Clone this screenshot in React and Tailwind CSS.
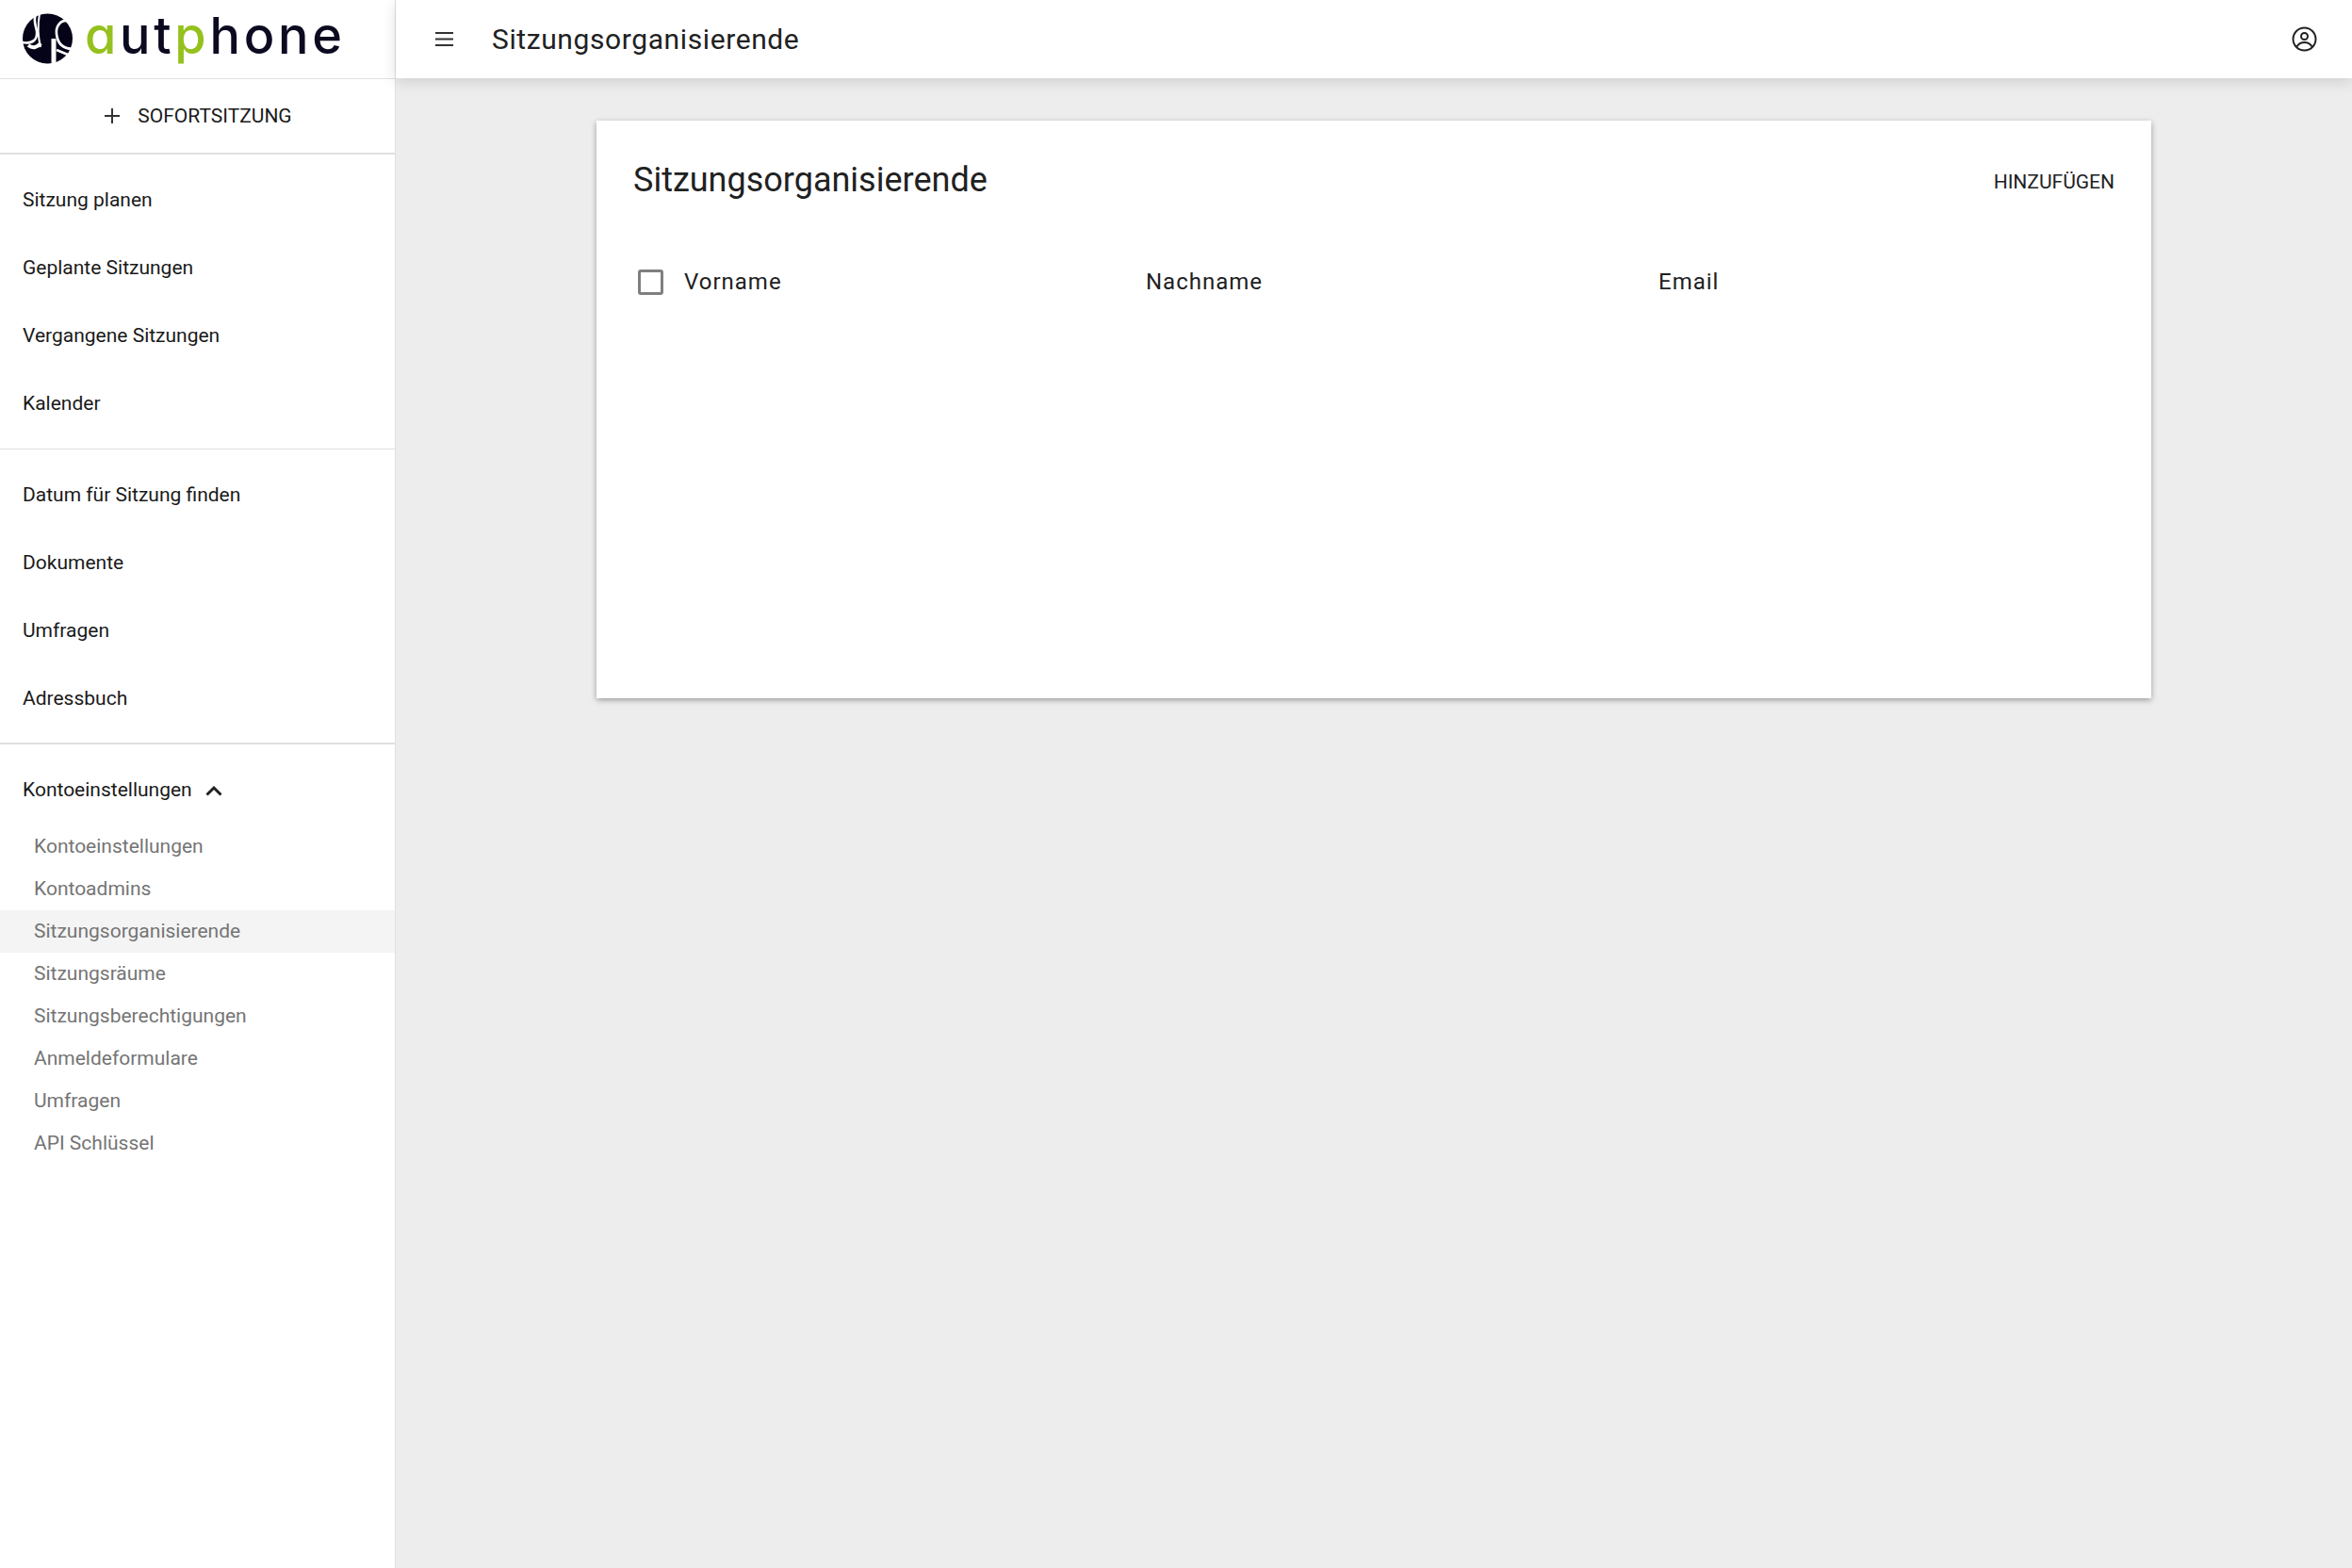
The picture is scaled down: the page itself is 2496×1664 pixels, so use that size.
import React from "react";

const top = ["Sitzung planen", "Geplante Sitzungen", "Vergangene Sitzungen", "Kalender"];
const mid = ["Datum für Sitzung finden", "Dokumente", "Umfragen", "Adressbuch"];
const sub = ["Kontoeinstellungen", "Kontoadmins", "Sitzungsorganisierende", "Sitzungsräume", "Sitzungsberechtigungen", "Anmeldeformulare", "Umfragen", "API Schlüssel"];

function Logo() {
  return (
    <svg width="56" height="56" viewBox="22 13 56 56" className="shrink-0">
      <circle cx="50.5" cy="41" r="26.5" fill="#050317" />
      <g fill="none" stroke="#fff">
        <path d="M38 14 C35 22 38 27 39 33 C40 42 35 47 23 45" strokeWidth="2.6" />
        <path d="M42 14 C40 26 40 38 43 50" strokeWidth="2" />
        <path d="M30 48 C35 52 40 50 43 46" strokeWidth="4" />
        <path d="M72 22 C64 21 59 28 60 36 C61 46 66 52 78 52" strokeWidth="2.6" />
        <path d="M57 41 L57 69" strokeWidth="5" />
        <path d="M60 53 L72 58" strokeWidth="2.6" />
      </g>
    </svg>
  );
}

function NavItem({ children }) {
  return <div className="flex h-[72px] items-center pl-6 text-[21px] text-[#1a1a1a]">{children}</div>;
}

export default function App() {
  return (
    <div className="flex min-h-screen bg-[#ededed] font-['Roboto',sans-serif]">
      <aside className="flex w-[420px] shrink-0 flex-col border-r border-[#e0e0e0] bg-white">
        <div className="flex h-[84px] items-start border-b border-[#e0e0e0] pl-[22px] pt-[13px]">
          <Logo />
          <span className="ml-[12px] mt-[-15px] font-['Inter',sans-serif] text-[54px] leading-[80px] font-medium tracking-[3.700px] text-[#0b0a20] [font-feature-settings:'cv11']">
            <span className="text-[#95c11f]">a</span>ut<span className="text-[#95c11f]">p</span>hone
          </span>
        </div>
        <div className="flex h-[80px] items-center justify-center gap-[17px] border-b-2 border-[#e0e0e0] pt-[2px] pr-[1px] text-[21px] text-[#1a1a1a]">
          <svg width="20" height="20" viewBox="0 0 20 20" stroke="#333" strokeWidth="2" className="ml-[1px] mb-[2px]"><path d="M10 2v16M2 10h16" /></svg>
          <span>SOFORTSITZUNG</span>
        </div>
        <div className="border-b border-[#e0e0e0] pt-[13px] pb-[11px]">
          {top.map((t) => <NavItem key={t}>{t}</NavItem>)}
        </div>
        <div className="border-b-2 border-[#e0e0e0] pt-[13px] pb-[10px]">
          {mid.map((t) => <NavItem key={t}>{t}</NavItem>)}
        </div>
        <div className="pt-[13px]">
          <div className="flex h-[72px] items-center gap-[14px] pl-6 text-[21px] text-[#1a1a1a]">
            <span>Kontoeinstellungen</span>
            <svg width="18" height="12" viewBox="0 0 18 12" fill="none" stroke="#222" strokeWidth="3"><path d="M1.5 10.5 9 3l7.500 7.500" /></svg>
          </div>
          <div className="mt-[1px]">
            {sub.map((t) => (
              <div key={t} className={`flex h-[45px] items-center pl-9 text-[21px] text-[#757575] ${t === "Sitzungsorganisierende" ? "bg-[#f4f4f4]" : ""}`}>{t}</div>
            ))}
          </div>
        </div>
      </aside>
      <div className="flex min-w-0 flex-1 flex-col">
        <header className="flex h-[83px] items-center bg-white shadow-[0_4px_14px_rgba(0,0,0,0.13)]">
          <svg width="19" height="17" viewBox="0 0 19 17" className="ml-[42px]" stroke="#333" strokeWidth="2"><path d="M0 2h19M0 8.500h19M0 15h19" /></svg>
          <h1 className="ml-[41px] text-[30px] font-normal tracking-[0.6px] text-[#212121]">Sitzungsorganisierende</h1>
          <svg width="27" height="27" viewBox="0 0 27 27" fill="none" stroke="#222" strokeWidth="2" className="ml-auto mr-[37px]">
            <circle cx="13.500" cy="13.500" r="12" />
            <circle cx="13.500" cy="10.500" r="3.500" />
            <path d="M5.500 21.500c2-3.500 5-4.500 8-4.500s6 1 8 4.500" />
          </svg>
        </header>
        <main className="flex-1 pl-[212px] pt-[45px]">
          <section className="ml-[1px] h-[613px] w-[1650px] bg-white px-[39px] pt-[39px] shadow-[0_2px_6px_rgba(0,0,0,0.35)]">
            <div className="flex items-center justify-between">
              <h2 className="text-[36px] font-normal leading-[48px] text-[#212121]">Sitzungsorganisierende</h2>
              <button className="mt-[6px] text-[21px] text-[#212121]">HINZUFÜGEN</button>
            </div>
            <div className="mt-[66px] flex items-center text-[24px] tracking-[1px] text-[#212121]">
              <div className="ml-[5px] mr-[22px] h-[27px] w-[27px] rounded-[3px] border-[3px] border-[#7f7f7f]" />
              <div className="w-[490px]">Vorname</div>
              <div className="w-[544px]">Nachname</div>
              <div>Email</div>
            </div>
          </section>
        </main>
      </div>
    </div>
  );
}
